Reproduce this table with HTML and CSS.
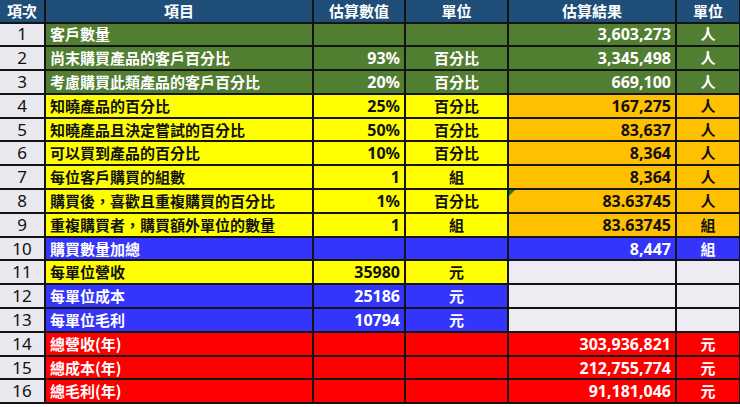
FILE: index.html
```html
<!DOCTYPE html>
<html lang="zh-TW">
<head>
<meta charset="utf-8">
<title>估算表</title>
<link rel="stylesheet" href="styles.css">
</head>
<body>
<table class="sheet">
  <colgroup>
    <col class="c-no"><col class="c-item"><col class="c-val"><col class="c-unit"><col class="c-res"><col class="c-unit2">
  </colgroup>
  <thead>
    <tr>
      <th>項次</th><th>項目</th><th>估算數值</th><th>單位</th><th>估算結果</th><th>單位</th>
    </tr>
  </thead>
  <tbody>
    <tr class="green">
      <td class="no">1</td><td class="item">客戶數量</td><td class="num"></td><td class="unit"></td><td class="num">3,603,273</td><td class="unit">人</td>
    </tr>
    <tr class="green">
      <td class="no">2</td><td class="item">尚末購買產品的客戶百分比</td><td class="num">93%</td><td class="unit">百分比</td><td class="num">3,345,498</td><td class="unit">人</td>
    </tr>
    <tr class="green">
      <td class="no">3</td><td class="item">考慮購買此類產品的客戶百分比</td><td class="num">20%</td><td class="unit">百分比</td><td class="num">669,100</td><td class="unit">人</td>
    </tr>
    <tr class="yo">
      <td class="no">4</td><td class="item">知曉產品的百分比</td><td class="num">25%</td><td class="unit">百分比</td><td class="num">167,275</td><td class="unit">人</td>
    </tr>
    <tr class="yo">
      <td class="no">5</td><td class="item">知曉產品且決定嘗試的百分比</td><td class="num">50%</td><td class="unit">百分比</td><td class="num">83,637</td><td class="unit">人</td>
    </tr>
    <tr class="yo">
      <td class="no">6</td><td class="item">可以買到產品的百分比</td><td class="num">10%</td><td class="unit">百分比</td><td class="num">8,364</td><td class="unit">人</td>
    </tr>
    <tr class="yo">
      <td class="no">7</td><td class="item">每位客戶購買的組數</td><td class="num">1</td><td class="unit">組</td><td class="num">8,364</td><td class="unit">人</td>
    </tr>
    <tr class="yo">
      <td class="no">8</td><td class="item">購買後，喜歡且重複購買的百分比</td><td class="num">1%</td><td class="unit">百分比</td><td class="num flag">83.63745</td><td class="unit">人</td>
    </tr>
    <tr class="yo">
      <td class="no">9</td><td class="item">重複購買者，購買額外單位的數量</td><td class="num">1</td><td class="unit">組</td><td class="num">83.63745</td><td class="unit">組</td>
    </tr>
    <tr class="blue">
      <td class="no">10</td><td class="item">購買數量加總</td><td class="num"></td><td class="unit"></td><td class="num">8,447</td><td class="unit">組</td>
    </tr>
    <tr class="yg">
      <td class="no">11</td><td class="item">每單位營收</td><td class="num">35980</td><td class="unit">元</td><td class="num"></td><td class="unit"></td>
    </tr>
    <tr class="bg">
      <td class="no">12</td><td class="item">每單位成本</td><td class="num">25186</td><td class="unit">元</td><td class="num"></td><td class="unit"></td>
    </tr>
    <tr class="bg">
      <td class="no">13</td><td class="item">每單位毛利</td><td class="num">10794</td><td class="unit">元</td><td class="num"></td><td class="unit"></td>
    </tr>
    <tr class="red">
      <td class="no">14</td><td class="item">總營收(年)</td><td class="num"></td><td class="unit"></td><td class="num">303,936,821</td><td class="unit">元</td>
    </tr>
    <tr class="red">
      <td class="no">15</td><td class="item">總成本(年)</td><td class="num"></td><td class="unit"></td><td class="num">212,755,774</td><td class="unit">元</td>
    </tr>
    <tr class="red">
      <td class="no">16</td><td class="item">總毛利(年)</td><td class="num"></td><td class="unit"></td><td class="num">91,181,046</td><td class="unit">元</td>
    </tr>
  </tbody>
</table>
</body>
</html>
```

FILE: styles.css
```css
html, body {
  margin: 0;
  padding: 0;
  background: #ffffff;
}

.sheet {
  width: 740px;
  border-collapse: collapse;
  table-layout: fixed;
  font-family: "Noto Sans", "Noto Sans CJK TC", sans-serif;
  font-weight: 700;
  font-size: 15px;
}

.c-no { width: 45px; }
.c-item { width: 268px; }
.c-val { width: 92px; }
.c-unit { width: 103px; }
.c-res { width: 168px; }
.c-unit2 { width: 64px; }

.sheet th,
.sheet td {
  border: 2px solid #141414;
  padding: 0 4px;
  height: 21.8px;
  line-height: 20px;
  white-space: nowrap;
  overflow: hidden;
  vertical-align: middle;
}

.sheet th {
  background: #1f4e79;
  color: #ffffff;
  text-align: center;
  border-top: none;
  height: 21.5px;
}

.sheet th:first-child,
.sheet td:first-child {
  border-left: none;
}

.sheet td.no {
  background: #e8e8ee;
  color: #111111;
  font-weight: 400;
  font-size: 17px;
  text-align: center;
}

.sheet td.item {
  text-align: left;
  font-family: "Noto Sans CJK TC", "Noto Sans", sans-serif;
}
.sheet td.num { text-align: right; font-size: 16px; }
.sheet td.unit { text-align: center; }

.green td { background: #527e32; color: #ffffff; }
.yo td { background: #ffff00; color: #111111; }
.yo td.num:nth-child(5),
.yo td:nth-child(6) { background: #ffc000; }
.blue td { background: #3434fb; color: #ffffff; }
.yg td { background: #ffff00; color: #111111; }
.bg td { background: #3434fb; color: #ffffff; }
.yg td:nth-child(5), .yg td:nth-child(6),
.bg td:nth-child(5), .bg td:nth-child(6) { background: #ececf2; }
.red td { background: #ff0000; color: #ffffff; }

.sheet td.flag { position: relative; }
.sheet td.flag::before {
  content: "";
  position: absolute;
  left: 0;
  top: 0;
  width: 0;
  height: 0;
  border-top: 6px solid #1d7a2c;
  border-right: 6px solid transparent;
}
```
